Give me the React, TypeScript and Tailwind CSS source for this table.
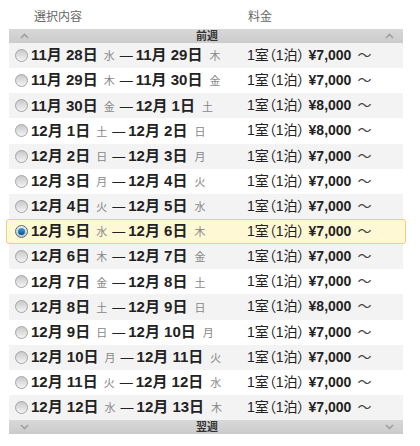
import React, { useState } from "react";

type Stay = { from: string; fromDay: string; to: string; toDay: string; price: string };

const STAYS: Stay[] = [
  { from: "11月 28日", fromDay: "水", to: "11月 29日", toDay: "木", price: "¥7,000" },
  { from: "11月 29日", fromDay: "木", to: "11月 30日", toDay: "金", price: "¥7,000" },
  { from: "11月 30日", fromDay: "金", to: "12月 1日", toDay: "土", price: "¥8,000" },
  { from: "12月 1日", fromDay: "土", to: "12月 2日", toDay: "日", price: "¥8,000" },
  { from: "12月 2日", fromDay: "日", to: "12月 3日", toDay: "月", price: "¥7,000" },
  { from: "12月 3日", fromDay: "月", to: "12月 4日", toDay: "火", price: "¥7,000" },
  { from: "12月 4日", fromDay: "火", to: "12月 5日", toDay: "水", price: "¥7,000" },
  { from: "12月 5日", fromDay: "水", to: "12月 6日", toDay: "木", price: "¥7,000" },
  { from: "12月 6日", fromDay: "木", to: "12月 7日", toDay: "金", price: "¥7,000" },
  { from: "12月 7日", fromDay: "金", to: "12月 8日", toDay: "土", price: "¥7,000" },
  { from: "12月 8日", fromDay: "土", to: "12月 9日", toDay: "日", price: "¥8,000" },
  { from: "12月 9日", fromDay: "日", to: "12月 10日", toDay: "月", price: "¥7,000" },
  { from: "12月 10日", fromDay: "月", to: "12月 11日", toDay: "火", price: "¥7,000" },
  { from: "12月 11日", fromDay: "火", to: "12月 12日", toDay: "水", price: "¥7,000" },
  { from: "12月 12日", fromDay: "水", to: "12月 13日", toDay: "木", price: "¥7,000" },
];

function Chevron({ up }: { up?: boolean }) {
  return (
    <svg width="9" height="6" viewBox="0 0 9 6" aria-hidden>
      <path
        d={up ? "M1 5 L4.5 1.5 L8 5" : "M1 1 L4.5 4.5 L8 1"}
        fill="none"
        stroke="#a0a0a0"
        strokeWidth="1.6"
      />
    </svg>
  );
}

function WeekBar({ label, up }: { label: string; up?: boolean }) {
  return (
    <div className="flex h-[14px] items-center justify-between bg-gradient-to-b from-[#d8d8d8] to-[#cbcbcb] pl-[11px] pr-[9px]">
      <Chevron up={up} />
      <span className="text-[11px] font-bold leading-none text-[#333]">{label}</span>
      <Chevron up={up} />
    </div>
  );
}

function Radio({ checked }: { checked: boolean }) {
  if (checked) {
    return (
      <span className="flex h-[13px] w-[13px] items-center justify-center rounded-full border border-[#5a6a78] bg-gradient-to-b from-[#e8eef3] to-[#b9c5cf]">
        <span className="h-[7px] w-[7px] rounded-full bg-gradient-to-b from-[#3fa0e0] to-[#0b4f8a]" />
      </span>
    );
  }
  return (
    <span className="h-[13px] w-[13px] rounded-full border border-[#a4a4a4] bg-gradient-to-b from-[#c9c9c9] to-[#f4f4f4]" />
  );
}

export default function App() {
  const [selected, setSelected] = useState(7);

  return (
    <div className="h-[446px] w-[420px] bg-white pt-[6px] font-['Liberation_Sans','Noto_Sans_CJK_JP',sans-serif] text-[#333] [font-feature-settings:'palt']">
      <div className="flex h-[22px] items-center text-[12px] text-[#666]">
        <span className="ml-[34px] w-[214px]">選択内容</span>
        <span>料金</span>
      </div>
      <div className="mx-[9px] mt-[1px] w-[394px]">
        <WeekBar label="前週" up />
        <ul>
          {STAYS.map((s, i) => {
            const on = i === selected;
            return (
              <li
                key={s.from}
                onClick={() => setSelected(i)}
                className={
                  on
                    ? "-mx-[3px] flex h-[25.15px] cursor-pointer items-center rounded-[3px] border border-[#ecd27c] bg-[#fff8d4] pl-[8px]"
                    : i % 2 === 0
                    ? "flex h-[25.15px] cursor-pointer items-center bg-[#f3f3f3] pl-[6px]"
                    : "flex h-[25.15px] cursor-pointer items-center bg-white pl-[6px]"
                }
              >
                <Radio checked={on} />
                <span className="ml-[3px] flex w-[216px] items-baseline whitespace-nowrap">
                  <span className="text-[15px] font-bold text-[#222]">{s.from}</span>
                  <span className="ml-[6px] text-[11px] text-[#888]">{s.fromDay}</span>
                  <span className="ml-[5px] text-[13px] text-[#222]">—</span>
                  <span className="ml-[3px] text-[15px] font-bold text-[#222]">{s.to}</span>
                  <span className="ml-[7px] text-[11px] text-[#888]">{s.toDay}</span>
                </span>
                <span className="flex items-baseline whitespace-nowrap text-[14px] text-[#222]">
                  <span>1室（1泊）</span>
                  <span className="ml-[4px] font-bold">{s.price}</span>
                  <span className="ml-[6px] text-[#444]">〜</span>
                </span>
              </li>
            );
          })}
        </ul>
        <WeekBar label="翌週" />
      </div>
    </div>
  );
}
